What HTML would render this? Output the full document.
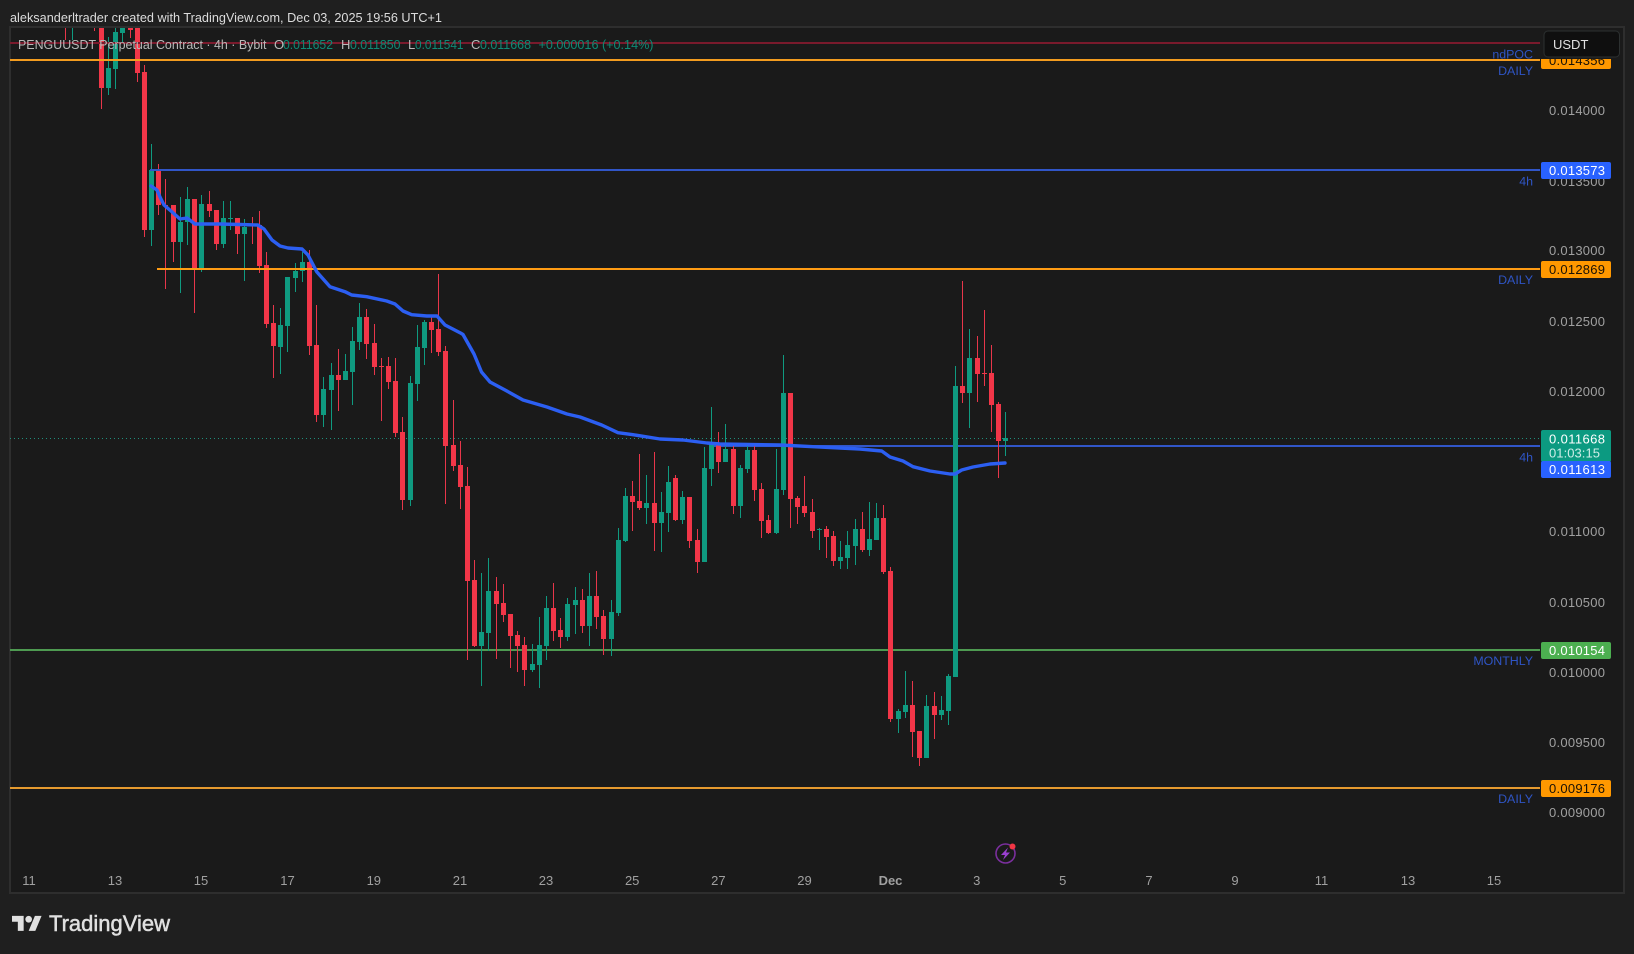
<!DOCTYPE html>
<html lang="en"><head><meta charset="utf-8"><title>PENGUUSDT chart</title>
<style>html,body{margin:0;padding:0;width:1634px;height:954px;overflow:hidden;background:#1f1f1f}svg{display:block}text{font-family:"Liberation Sans",sans-serif}</style>
</head><body>
<svg width="1634" height="954" viewBox="0 0 1634 954" xmlns="http://www.w3.org/2000/svg">
<rect width="1634" height="954" fill="#1f1f1f"/>
<rect x="10" y="27" width="1614" height="866" fill="#1a1a1a" stroke="#2e2e2e" stroke-width="2"/>
<text x="10" y="22" font-size="13" fill="#dcdcdc" textLength="432" lengthAdjust="spacingAndGlyphs">aleksanderltrader created with TradingView.com, Dec 03, 2025 19:56 UTC+1</text>

<svg x="10" y="28" width="1530" height="864" viewBox="10 28 1530 864">
<g shape-rendering="crispEdges" fill="none">
<path d="M10 650H1540" stroke="#4e9a51" stroke-width="2"/>
<path d="M10 788H1540" stroke="#e59a2f" stroke-width="2"/>
<path d="M711 446H1540" stroke="#3156c8" stroke-width="2"/>
<path d="M10 438.5H1540" stroke="#1f8f7c" stroke-width="1" stroke-dasharray="1 3"/>
<path stroke="#e8364a" stroke-width="1" d="M65.5 27V40M94.5 27V31M101.5 27V109M130.5 27V38M137.5 27V82M144.5 65V237M158.5 164V215M165.5 179V289M173.5 205V262M194.5 199V313M209.5 191V217M216.5 210V250M237.5 218V254M252.5 217V244M259.5 211V273M266.5 252V328M273.5 305V378M309.5 250V355M316.5 305V422M338.5 349V411M366.5 309V359M374.5 324V375M381.5 358V421M388.5 357V389M395.5 358V437M402.5 417V510M431.5 317V353M438.5 274V356M445.5 346V504M453.5 400V471M460.5 441V509M467.5 467V660M474.5 560V647M496.5 577V659M503.5 584V622M510.5 614V668M517.5 631V672M524.5 637V686M553.5 583V641M560.5 618V648M582.5 589V633M596.5 571V629M603.5 610V655M632.5 481V531M639.5 454V510M654.5 452V551M675.5 475V521M689.5 497V548M697.5 529V573M718.5 432V473M733.5 445V514M754.5 445V501M761.5 483V538M768.5 515V534M790.5 393V528M797.5 496V524M804.5 476V517M812.5 499V538M826.5 526V558M833.5 531V566M862.5 512V552M883.5 505V574M890.5 567V722M912.5 681V757M919.5 731V766M934.5 692V739M962.5 281V403M977.5 336V402M984.5 310V386M991.5 345V432M998.5 402V478"/>
<path stroke="#0f9a80" stroke-width="1" d="M72.5 27V40M108.5 37V95M115.5 27V89M122.5 27V43M151.5 144V246M180.5 197V293M187.5 187V245M201.5 195V272M223.5 201V248M230.5 201V230M244.5 219V281M280.5 308V374M287.5 277V352M295.5 263V292M302.5 252V282M323.5 377V427M331.5 363V430M345.5 354V380M352.5 327V405M359.5 303V350M410.5 376V506M417.5 325V401M424.5 320V365M481.5 573V686M488.5 558V651M532.5 644V672M539.5 617V688M546.5 596V660M567.5 598V641M575.5 587V634M589.5 573V646M611.5 600V656M618.5 528V616M625.5 488V542M646.5 475V524M661.5 492V552M668.5 466V532M682.5 491V524M704.5 447V562M711.5 407V486M725.5 424V462M740.5 465V518M747.5 445V473M776.5 449V534M783.5 355V495M819.5 528V550M840.5 541V569M847.5 531V569M855.5 519V565M869.5 502V556M876.5 503V540M898.5 709V733M905.5 671V718M926.5 695V758M941.5 696V720M948.5 674V725M955.5 366V677M969.5 329V428M1005.5 412V456"/>
<path stroke="#f23648" stroke-width="5" d="M101.5 27V88M130.5 27V30M137.5 27V73M144.5 72V230M158.5 170V205M165.5 205V206M173.5 205V242M194.5 199V268M209.5 204V211M216.5 210V244M237.5 218V234M259.5 225V266M266.5 265V324M273.5 323V346M309.5 262V346M316.5 345V415M338.5 375V380M366.5 317V344M374.5 343V367M381.5 366V367M388.5 366V382M395.5 381V433M402.5 432V500M431.5 322V330M438.5 329V352M445.5 351V446M453.5 445V466M460.5 465V487M467.5 486V581M474.5 580V646M496.5 591V604M503.5 603V615M510.5 614V636M517.5 635V646M524.5 645V670M553.5 608V631M560.5 630V637M582.5 600V626M596.5 596V617M603.5 616V639M632.5 496V502M639.5 501V508M654.5 503V523M675.5 478V520M689.5 497V541M697.5 540V562M718.5 443V462M733.5 449V506M754.5 450V490M761.5 489V521M768.5 520V533M790.5 393V499M797.5 498V507M804.5 506V513M812.5 512V531M826.5 529V537M833.5 536V561M862.5 529V550M883.5 518V572M890.5 571V719M912.5 705V732M919.5 731V758M934.5 706V715M962.5 386V393M977.5 358V374M984.5 373V374M991.5 373V405M998.5 404V441"/>
<path stroke="#0f9a80" stroke-width="5" d="M108.5 68V88M115.5 32V69M122.5 27V33M151.5 170V230M180.5 222V242M187.5 199V222M201.5 204V268M223.5 218V244M230.5 218V219M244.5 227V234M280.5 325V347M287.5 277V326M295.5 271V278M302.5 262V271M323.5 389V415M331.5 375V390M345.5 371V380M352.5 341V372M359.5 317V342M410.5 383V500M417.5 347V384M424.5 322V348M481.5 632V646M488.5 591V633M532.5 664V670M539.5 645V665M546.5 608V646M567.5 604V637M575.5 600V605M589.5 596V626M611.5 612V639M618.5 540V613M625.5 496V541M646.5 503V508M661.5 512V523M668.5 482V513M682.5 497V520M704.5 468V562M711.5 443V469M725.5 449V462M740.5 468V506M747.5 450V469M776.5 489V533M783.5 393V490M819.5 529V530M840.5 557V561M847.5 545V558M855.5 529V546M869.5 539V550M876.5 518V540M898.5 711V719M905.5 705V712M926.5 706V758M941.5 710V715M948.5 676V711M955.5 386V677M969.5 358V393M1005.5 438V441"/>
<path d="M10 43H1540" stroke="#7a1a2c" stroke-width="2"/>
<path d="M10 60H1540" stroke="#f39c1f" stroke-width="2"/>
<path d="M150 170H1540" stroke="#3156c8" stroke-width="2"/>
<path d="M157 269H1540" stroke="#ff9c14" stroke-width="2"/>
</g>
<path fill="none" stroke="#2c5ff2" stroke-width="3.4" stroke-linejoin="round" stroke-linecap="round" d="M151 186L157 190L160 197L164 205L171 211L180 219L187 218L195 224L205 224L220 224L240 224.5L258 225L264 229L272 240L280 246L288 248L302 249L308 255L316.7 271.7L330 286.7L345 291.7L351.7 295L366.7 296.7L386.7 301L395 304L403 311L411.7 314.7L426.7 316L437 316L445 325L460 332.7L463 334.5L474 354L481.5 372L490 382L505 390L523 400L547 407L567 414L580 417L601.7 425L618 432.7L633 434.7L660 439L683 440L707 443L720 444L780 445L813 446.7L860 449L881.7 451L890 457L903 461L913 466.7L930 471L950 474L955 474L961.7 470L973 467L990 464L1005 463"/>
</svg>

<g font-size="13">
<text x="18" y="49" fill="#b9b9b9" textLength="248.5" lengthAdjust="spacingAndGlyphs">PENGUUSDT Perpetual Contract · 4h · Bybit</text>
<text x="274" y="49" fill="#b9b9b9">O</text><text x="283" y="49" fill="#0e8a75" textLength="50" lengthAdjust="spacingAndGlyphs">0.011652</text>
<text x="341" y="49" fill="#b9b9b9">H</text><text x="350" y="49" fill="#0e8a75" textLength="50.5" lengthAdjust="spacingAndGlyphs">0.011850</text>
<text x="408" y="49" fill="#b9b9b9">L</text><text x="415" y="49" fill="#0e8a75" textLength="48.5" lengthAdjust="spacingAndGlyphs">0.011541</text>
<text x="471" y="49" fill="#b9b9b9">C</text><text x="480" y="49" fill="#0e8a75" textLength="51" lengthAdjust="spacingAndGlyphs">0.011668</text>
<text x="538.5" y="49" fill="#0e8a75" textLength="115" lengthAdjust="spacingAndGlyphs">+0.000016 (+0.14%)</text>
</g>

<g font-size="13" fill="#a0a0a0">
<text x="1549" y="115" textLength="56">0.014000</text>
<text x="1549" y="186" textLength="56">0.013500</text>
<text x="1549" y="255" textLength="56">0.013000</text>
<text x="1549" y="326" textLength="56">0.012500</text>
<text x="1549" y="396" textLength="56">0.012000</text>
<text x="1549" y="536" textLength="56">0.011000</text>
<text x="1549" y="607" textLength="56">0.010500</text>
<text x="1549" y="677" textLength="56">0.010000</text>
<text x="1549" y="747" textLength="56">0.009500</text>
<text x="1549" y="817" textLength="56">0.009000</text>
</g>

<g font-size="13">
<rect x="1541" y="51" width="70" height="18" rx="2" fill="#ff9800"/><text x="1549" y="65" textLength="56" fill="#1a1206">0.014356</text>
<rect x="1540" y="28" width="83" height="31" fill="#1a1a1a"/>
<rect x="1541" y="162" width="70" height="17" rx="2" fill="#2962ff"/><text x="1549" y="175" textLength="56" fill="#fff">0.013573</text>
<rect x="1541" y="261" width="70" height="17" rx="2" fill="#ff9800"/><text x="1549" y="274" textLength="56" fill="#1a1206">0.012869</text>
<rect x="1541" y="430" width="70" height="32" rx="2" fill="#0c9a81"/><text x="1549" y="443.5" textLength="56" fill="#fff">0.011668</text><text x="1549" y="457.5" textLength="51" fill="#cfeee8">01:03:15</text>
<rect x="1541" y="461" width="70" height="17" rx="2" fill="#2962ff"/><text x="1549" y="474" textLength="56" fill="#fff">0.011613</text>
<rect x="1541" y="642" width="70" height="17" rx="2" fill="#4caf50"/><text x="1549" y="655" textLength="56" fill="#fff">0.010154</text>
<rect x="1541" y="780" width="70" height="17" rx="2" fill="#ff9800"/><text x="1549" y="793" textLength="56" fill="#1a1206">0.009176</text>
</g>

<rect x="1544" y="31" width="75.5" height="26" rx="4" fill="#0f0f0f" stroke="#2c3030" stroke-width="1"/>
<text x="1553" y="49" font-size="13" fill="#e0e0e0">USDT</text>

<g font-size="12.4" fill="#2f55c5" text-anchor="end">
<text x="1533" y="58.5">ndPOC</text>
<text x="1533" y="75">DAILY</text>
<text x="1533" y="185.5">4h</text>
<text x="1533" y="284">DAILY</text>
<text x="1533" y="461.5">4h</text>
<text x="1533" y="665">MONTHLY</text>
<text x="1533" y="803">DAILY</text>
</g>

<g font-size="13" fill="#a0a0a0" text-anchor="middle">
<text x="29" y="885">11</text><text x="115" y="885">13</text><text x="201" y="885">15</text><text x="287.5" y="885">17</text><text x="373.8" y="885">19</text><text x="460" y="885">21</text><text x="546" y="885">23</text><text x="632.2" y="885">25</text><text x="718.4" y="885">27</text><text x="804.5" y="885">29</text><text x="890.5" y="885" font-weight="700">Dec</text><text x="976.7" y="885">3</text><text x="1062.8" y="885">5</text><text x="1149" y="885">7</text><text x="1235" y="885">9</text><text x="1321.5" y="885">11</text><text x="1408" y="885">13</text><text x="1494" y="885">15</text>
</g>

<circle cx="1005.5" cy="853.5" r="9.5" fill="none" stroke="#7b2f9e" stroke-width="1.6"/>
<path d="M1008 847.5L1001 855H1005L1003 860L1010 852.5H1006Z" fill="#9a3fd0"/>
<circle cx="1012.5" cy="846.5" r="3" fill="#f23645"/>

<g fill="#e0e0e0" transform="translate(12 912.6) scale(.833)">
<path d="M14 22H7V11H0V4h14v18zM28 22h-8l7.5-18h8L28 22z"/><circle cx="20" cy="8" r="4"/>
</g>
<text x="49" y="931" font-size="22" fill="#e0e0e0" stroke="#e0e0e0" stroke-width=".5" textLength="121" lengthAdjust="spacingAndGlyphs">TradingView</text>
</svg>
</body></html>
